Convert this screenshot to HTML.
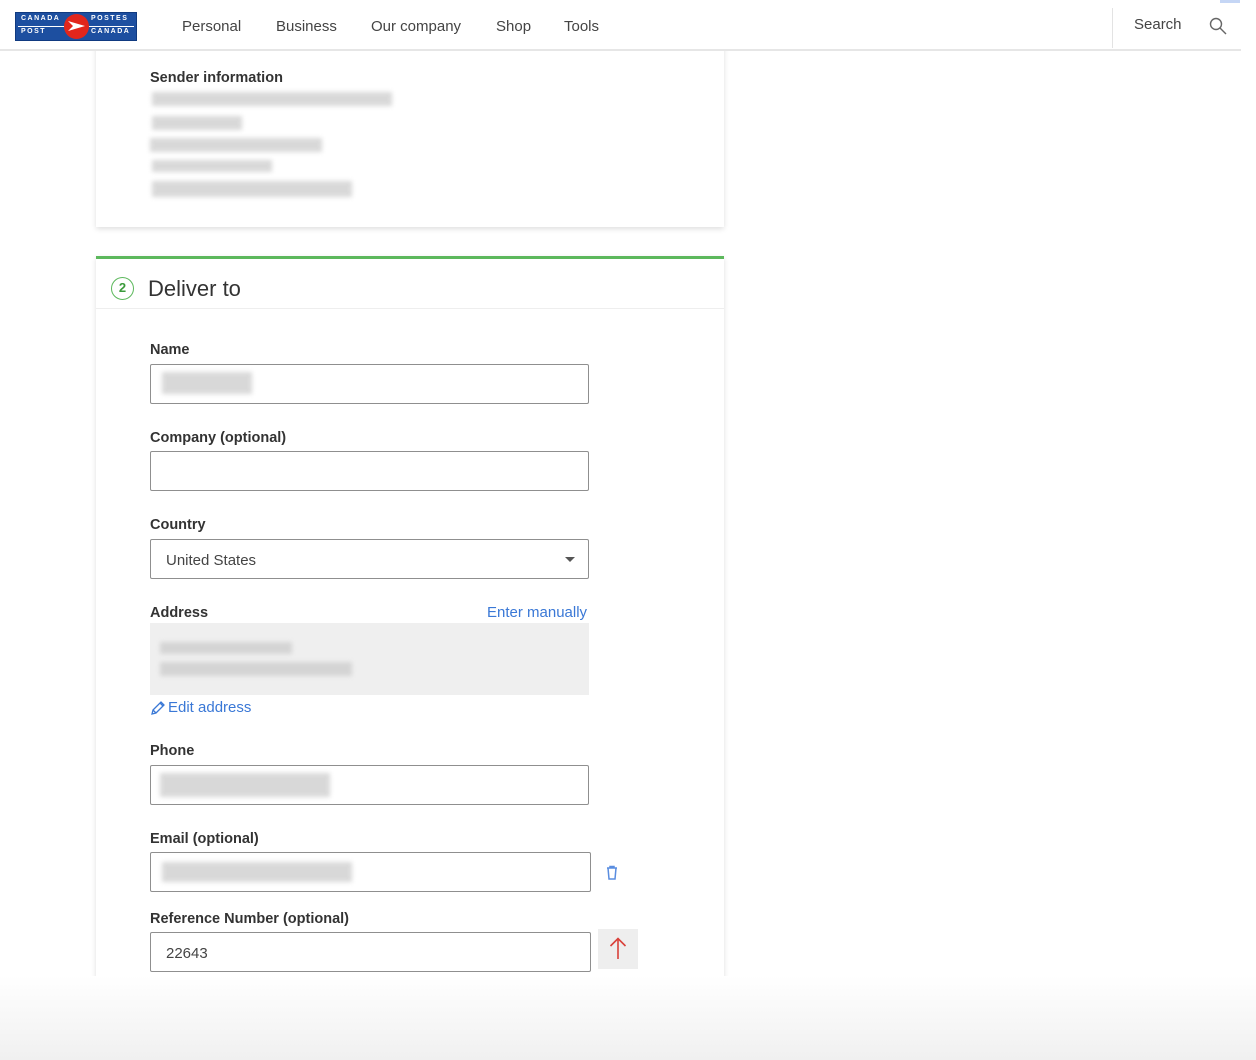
<!DOCTYPE html>
<html><head><meta charset="utf-8"><style>
*{box-sizing:border-box;margin:0;padding:0}
body{width:1256px;height:1060px;position:relative;overflow:hidden;background:#fff;font-family:"Liberation Sans",Arial,sans-serif;color:#333}
.a{position:absolute}
.hdr{left:0;top:0;width:1241px;height:51px;border-bottom:2px solid #e6e6e6;background:#fff}
.nav{top:18px;font-size:15px;color:#444}
.card{background:#fff;box-shadow:0 2px 5px rgba(0,0,0,.13)}
.lbl{font-size:14.5px;font-weight:bold;color:#333;left:150px}
.inp{left:150px;width:439px;height:40px;border:1px solid #8f8f8f;border-radius:2px;background:#fff}
.blur{background:#ccc;filter:blur(2.5px);opacity:.75}
.link{color:#3a78d6;font-size:15px}
</style></head><body>
<div class="a card" style="left:96px;top:40px;width:628px;height:187px"></div>
<div class="a lbl" style="top:70px;font-size:14.5px">Sender information</div>
<div class="a blur" style="left:152px;top:92px;width:240px;height:14px"></div>
<div class="a blur" style="left:152px;top:116px;width:90px;height:14px"></div>
<div class="a blur" style="left:150px;top:138px;width:172px;height:14px"></div>
<div class="a blur" style="left:152px;top:160px;width:120px;height:12px"></div>
<div class="a blur" style="left:152px;top:181px;width:200px;height:16px"></div>

<div class="a card" style="left:96px;top:256px;width:628px;height:760px"></div>
<div class="a" style="left:96px;top:256px;width:628px;height:3px;background:#5cb85c"></div>
<div class="a" style="left:96px;top:308px;width:628px;height:1px;background:#eee"></div>
<div class="a" style="left:111px;top:277px;width:23px;height:23px;border:1.5px solid #5cb85c;border-radius:50%;color:#3a9a3a;font-size:13px;font-weight:bold;text-align:center;line-height:20px">2</div>
<div class="a" style="left:148px;top:276px;font-size:22px;color:#333">Deliver to</div>

<div class="a lbl" style="top:342px">Name</div>
<div class="a inp" style="top:364px"></div>
<div class="a blur" style="left:162px;top:372px;width:90px;height:22px"></div>
<div class="a lbl" style="top:430px">Company (optional)</div>
<div class="a inp" style="top:451px"></div>
<div class="a lbl" style="top:517px">Country</div>
<div class="a inp" style="top:539px"></div>
<div class="a" style="left:166px;top:552px;font-size:15px;color:#444">United States</div>
<div class="a" style="left:565px;top:557px;width:0;height:0;border-left:5px solid transparent;border-right:5px solid transparent;border-top:5px solid #555"></div>
<div class="a lbl" style="top:605px">Address</div>
<div class="a link" style="left:487px;top:604px">Enter manually</div>
<div class="a" style="left:150px;top:623px;width:439px;height:72px;background:#efefef"></div>
<div class="a blur" style="left:160px;top:642px;width:132px;height:12px"></div>
<div class="a blur" style="left:160px;top:662px;width:192px;height:14px"></div>
<svg class="a" style="left:150px;top:700px" width="16" height="16" viewBox="0 0 16 16"><path d="M2 14l1-4 8-8 3 3-8 8z M3 10l3 3 M10 3l3 3" fill="none" stroke="#3a78d6" stroke-width="1.3"/></svg>
<div class="a link" style="left:168px;top:699px">Edit address</div>
<div class="a lbl" style="top:743px">Phone</div>
<div class="a inp" style="top:765px"></div>
<div class="a blur" style="left:160px;top:773px;width:170px;height:24px"></div>
<div class="a lbl" style="top:831px">Email (optional)</div>
<div class="a inp" style="top:852px;width:441px"></div>
<div class="a blur" style="left:162px;top:862px;width:190px;height:20px"></div>
<svg class="a" style="left:604px;top:864px" width="16" height="17" viewBox="0 0 16 17"><path d="M3 4h10 M6 4V2.5h4V4 M4 4l1 11h6l1-11" fill="none" stroke="#5a8de0" stroke-width="1.5"/></svg>
<div class="a lbl" style="top:911px">Reference Number (optional)</div>
<div class="a inp" style="top:932px;width:441px"></div>
<div class="a" style="left:166px;top:945px;font-size:15px;color:#444">22643</div>
<div class="a" style="left:598px;top:929px;width:40px;height:40px;background:#eee"></div>
<svg class="a" style="left:606px;top:936px" width="24" height="26" viewBox="0 0 24 26"><path d="M12 23V2 M4.5 10L12 2.5 19.5 10" fill="none" stroke="#d9413a" stroke-width="1.6"/></svg>

<div class="a" style="left:0;top:976px;width:1256px;height:84px;background:linear-gradient(#fff,#f0f0f0)"></div>

<div class="a hdr"></div>
<div class="a" style="left:15px;top:12px;width:122px;height:29px;background:#1d4fa0;border:1px solid #103a80"></div>
<div class="a" style="left:18px;top:26px;width:116px;height:1px;background:#fff"></div>
<div class="a" style="left:64px;top:14px;width:25px;height:25px;border-radius:50%;background:#e2261c"></div>
<svg class="a" style="left:66px;top:19px" width="22" height="14" viewBox="0 0 22 14"><path d="M2 2l17 5-17 5 5-5z" fill="#fff"/></svg>
<div class="a" style="left:21px;top:15px;font-size:7px;color:#fff;font-weight:bold;letter-spacing:1.5px">CANADA</div>
<div class="a" style="left:21px;top:28px;font-size:7px;color:#fff;font-weight:bold;letter-spacing:1.5px">POST</div>
<div class="a" style="left:91px;top:15px;font-size:7px;color:#fff;font-weight:bold;letter-spacing:1.5px">POSTES</div>
<div class="a" style="left:91px;top:28px;font-size:7px;color:#fff;font-weight:bold;letter-spacing:1.5px">CANADA</div>
<div class="a nav" style="left:182px">Personal</div>
<div class="a nav" style="left:276px">Business</div>
<div class="a nav" style="left:371px">Our company</div>
<div class="a nav" style="left:496px">Shop</div>
<div class="a nav" style="left:564px">Tools</div>
<div class="a" style="left:1112px;top:8px;width:1px;height:40px;background:#e3e3e3"></div>
<div class="a nav" style="left:1134px;top:16px">Search</div>
<svg class="a" style="left:1208px;top:16px" width="20" height="20" viewBox="0 0 20 20"><circle cx="8" cy="8" r="5.5" fill="none" stroke="#666" stroke-width="1.4"/><path d="M12 12l6 6" stroke="#666" stroke-width="1.4"/></svg>
<div class="a" style="left:1220px;top:0;width:20px;height:3px;background:#c5d6f5"></div>
</body></html>
